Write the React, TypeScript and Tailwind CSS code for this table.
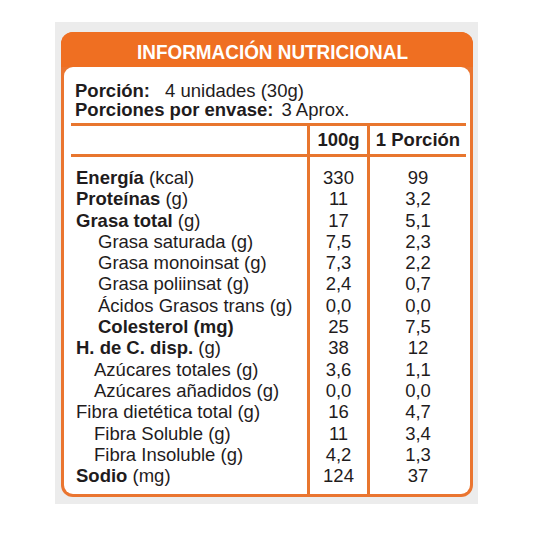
import React from 'react';

type Row = { label: string; unit?: string; bold?: boolean; allBold?: boolean; indent?: 'lg' | 'sm'; a: string; b: string };

const rows: Row[] = [
  { label: 'Energía', unit: ' (kcal)', bold: true, a: '330', b: '99' },
  { label: 'Proteínas', unit: ' (g)', bold: true, a: '11', b: '3,2' },
  { label: 'Grasa total', unit: ' (g)', bold: true, a: '17', b: '5,1' },
  { label: 'Grasa saturada (g)', indent: 'lg', a: '7,5', b: '2,3' },
  { label: 'Grasa monoinsat (g)', indent: 'lg', a: '7,3', b: '2,2' },
  { label: 'Grasa poliinsat (g)', indent: 'lg', a: '2,4', b: '0,7' },
  { label: 'Ácidos Grasos trans (g)', indent: 'lg', a: '0,0', b: '0,0' },
  { label: 'Colesterol (mg)', allBold: true, indent: 'lg', a: '25', b: '7,5' },
  { label: 'H. de C. disp.', unit: ' (g)', bold: true, a: '38', b: '12' },
  { label: 'Azúcares totales (g)', indent: 'sm', a: '3,6', b: '1,1' },
  { label: 'Azúcares añadidos (g)', indent: 'sm', a: '0,0', b: '0,0' },
  { label: 'Fibra dietética total (g)', a: '16', b: '4,7' },
  { label: 'Fibra Soluble (g)', indent: 'sm', a: '11', b: '3,4' },
  { label: 'Fibra Insoluble (g)', indent: 'sm', a: '4,2', b: '1,3' },
  { label: 'Sodio', unit: ' (mg)', bold: true, a: '124', b: '37' },
];

export default function App() {
  return (
    <div className="w-[533px] h-[533px] bg-white pt-[22px] pl-[55px] font-['Liberation_Sans',Arial,sans-serif] text-[#1f1c1d]">
      <div className="w-[423px] h-[482px] bg-[#ececec] pt-[10px] pl-[6px] overflow-hidden">
        {/* Card */}
        <div className="w-[412px] h-[465px] bg-[#ea7530] rounded-[12px] p-[3px] flex flex-col">
          <div className="h-[35px] shrink-0 bg-[#ef6f22] -mx-[3px] -mt-[3px] pt-[3px] pl-[10px] rounded-t-[12px] flex items-center justify-center">
            <h1 className="text-white font-bold text-[21px] leading-none scale-x-90 whitespace-nowrap">
              INFORMACIÓN NUTRICIONAL
            </h1>
          </div>
          <div className="flex-1 bg-white rounded-[9px] flex flex-col pt-[14px]">
            <div className="pl-[11px] text-[18.5px] leading-[19px]">
              <p>
                <span className="font-bold">Porción:</span>
                <span className="ml-[15px]">4 unidades (30g)</span>
              </p>
              <p>
                <span className="font-bold">Porciones por envase:</span>
                <span className="ml-[8px]">3 Aprox.</span>
              </p>
            </div>

            {/* Table */}
            <div className="ml-[7px] mr-[4px] mt-[4px] flex-1 flex text-[18.5px]">
              <div className="w-[236px] flex flex-col">
                <div className="h-[34px] border-y-[3px] border-[#e8762e]" />
                <div className="pt-[10px]">
                  {rows.map((r) => (
                    <div
                      key={r.label}
                      className={`leading-[21.3px] whitespace-nowrap ${r.indent === 'lg' ? 'pl-[27px]' : r.indent === 'sm' ? 'pl-[23px]' : 'pl-[5px]'} ${r.allBold ? 'font-bold' : ''}`}
                    >
                      {r.bold ? <span className="font-bold">{r.label}</span> : r.label}
                      {r.unit}
                    </div>
                  ))}
                </div>
              </div>
              <div className="w-[60px] flex flex-col border-l-[3px] border-[#e8762e]">
                <div className="h-[34px] border-y-[3px] border-[#e8762e] flex items-center justify-center font-bold leading-none pt-[1px]">
                  100g
                </div>
                <div className="pt-[10px] text-center">
                  {rows.map((r) => (
                    <div key={r.label} className="leading-[21.3px]">{r.a}</div>
                  ))}
                </div>
              </div>
              <div className="flex-1 flex flex-col border-l-[3px] border-[#e8762e]">
                <div className="h-[34px] border-y-[3px] border-[#e8762e] flex items-center justify-center font-bold leading-none pt-[1px]">
                  1 Porción
                </div>
                <div className="pt-[10px] text-center">
                  {rows.map((r) => (
                    <div key={r.label} className="leading-[21.3px]">{r.b}</div>
                  ))}
                </div>
              </div>
            </div>
          </div>
        </div>
      </div>
    </div>
  );
}
